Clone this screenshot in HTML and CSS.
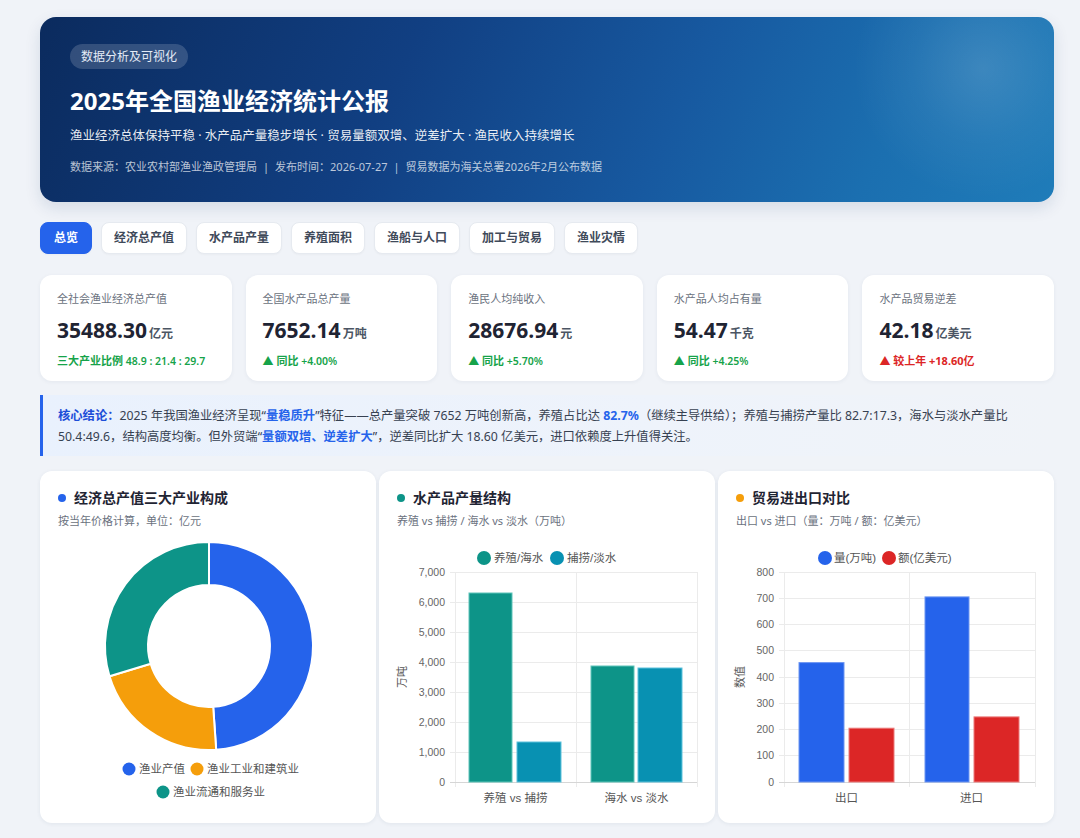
FILE: index.html
```html
<!DOCTYPE html>
<html lang="zh-CN">
<head>
<meta charset="utf-8">
<title>2025年全国渔业经济统计公报</title>
<link rel="stylesheet" href="styles.css">
</head>
<body>
<div class="page">
  <header class="hero">
    <span class="badge">数据分析及可视化</span>
    <h1>2025年全国渔业经济统计公报</h1>
    <p class="sub">渔业经济总体保持平稳 · 水产品产量稳步增长 · 贸易量额双增、逆差扩大 · 渔民收入持续增长</p>
    <p class="meta">数据来源：农业农村部渔业渔政管理局<span class="sep">|</span>发布时间：2026-07-27<span class="sep">|</span>贸易数据为海关总署2026年2月公布数据</p>
  </header>

  <nav class="tabs">
    <span class="tab active">总览</span>
    <span class="tab">经济总产值</span>
    <span class="tab">水产品产量</span>
    <span class="tab">养殖面积</span>
    <span class="tab">渔船与人口</span>
    <span class="tab">加工与贸易</span>
    <span class="tab">渔业灾情</span>
  </nav>

  <section class="stats">
    <div class="stat">
      <div class="label">全社会渔业经济总产值</div>
      <div class="num">35488.30<span class="unit">亿元</span></div>
      <div class="trend up"><b>三大产业比例</b> 48.9 : 21.4 : 29.7</div>
    </div>
    <div class="stat">
      <div class="label">全国水产品总产量</div>
      <div class="num">7652.14<span class="unit">万吨</span></div>
      <div class="trend up"><b>▲ 同比</b> +4.00%</div>
    </div>
    <div class="stat">
      <div class="label">渔民人均纯收入</div>
      <div class="num">28676.94<span class="unit">元</span></div>
      <div class="trend up"><b>▲ 同比</b> +5.70%</div>
    </div>
    <div class="stat">
      <div class="label">水产品人均占有量</div>
      <div class="num">54.47<span class="unit">千克</span></div>
      <div class="trend up"><b>▲ 同比</b> +4.25%</div>
    </div>
    <div class="stat">
      <div class="label">水产品贸易逆差</div>
      <div class="num">42.18<span class="unit">亿美元</span></div>
      <div class="trend down"><b>▲ 较上年</b> <b>+18.60亿</b></div>
    </div>
  </section>

  <div class="conclusion">
    <p class="ctext"><b class="lead">核心结论：</b><span>2025 年我国渔业经济呈现“</span><b class="hl">量稳质升</b><span>”特征——总产量突破 7652 万吨创新高，养殖占比达 </span><b class="hl">82.7%</b><span>（继续主导供给）；养殖与捕捞产量比 82.7:17.3，海水与淡水产量比 </span><span>50.4:49.6，结构高度均衡。但外贸端“</span><b class="hl">量额双增、逆差扩大</b><span>”，逆差同比扩大 18.60 亿美元，进口依赖度上升值得关注。</span></p>
  </div>

  <section class="charts">
    <div class="card">
      <div class="ctitle"><i class="dot blue"></i>经济总产值三大产业构成</div>
      <div class="csub">按当年价格计算，单位：亿元</div>
      <svg class="plot" width="336" height="274" viewBox="0 0 336 274">
        <g stroke="#ffffff" stroke-width="2" stroke-linejoin="round">
          <path fill="#2563eb" d="M169 3 A104 104 0 0 1 176.18 210.75 L173.21 167.85 A61 61 0 0 0 169 46 Z"/>
          <path fill="#f59e0b" d="M176.18 210.75 A104 104 0 0 1 69.5 137.27 L110.64 124.75 A61 61 0 0 0 173.21 167.85 Z"/>
          <path fill="#0d9488" d="M69.5 137.27 A104 104 0 0 1 169 3 L169 46 A61 61 0 0 0 110.64 124.75 Z"/>
        </g>
        <circle cx="89" cy="230" r="6.5" fill="#2563eb"/>
        <text class="lg" x="99" y="234">渔业产值</text>
        <circle cx="157" cy="230" r="6.5" fill="#f59e0b"/>
        <text class="lg" x="167" y="234">渔业工业和建筑业</text>
        <circle cx="123" cy="253" r="6.5" fill="#0d9488"/>
        <text class="lg" x="133" y="257">渔业流通和服务业</text>
      </svg>
    </div>

    <div class="card">
      <div class="ctitle"><i class="dot teal"></i>水产品产量结构</div>
      <div class="csub">养殖 vs 捕捞 / 海水 vs 淡水（万吨）</div>
      <svg class="plot" width="336" height="274" viewBox="0 0 336 274">
        <circle cx="105" cy="19" r="7" fill="#0d9488"/>
        <text class="lg" x="115" y="23">养殖/海水</text>
        <circle cx="178" cy="19" r="7" fill="#0891b2"/>
        <text class="lg" x="188" y="23">捕捞/淡水</text>
        <g stroke="#ebebeb" stroke-width="1" shape-rendering="crispEdges">
          <line x1="71" y1="33" x2="318" y2="33"/>
          <line x1="71" y1="63" x2="318" y2="63"/>
          <line x1="71" y1="93" x2="318" y2="93"/>
          <line x1="71" y1="123" x2="318" y2="123"/>
          <line x1="71" y1="153" x2="318" y2="153"/>
          <line x1="71" y1="183" x2="318" y2="183"/>
          <line x1="71" y1="213" x2="318" y2="213"/>
          <line x1="76" y1="33" x2="76" y2="248"/>
          <line x1="197" y1="33" x2="197" y2="248"/>
          <line x1="318" y1="33" x2="318" y2="248"/>
        </g>
        <line x1="71" y1="243" x2="318" y2="243" stroke="#d6d6d6" stroke-width="1" shape-rendering="crispEdges"/>
        <g class="tk">
          <text x="66" y="36.5">7,000</text>
          <text x="66" y="66.5">6,000</text>
          <text x="66" y="96.5">5,000</text>
          <text x="66" y="126.5">4,000</text>
          <text x="66" y="156.5">3,000</text>
          <text x="66" y="186.5">2,000</text>
          <text x="66" y="216.5">1,000</text>
          <text x="66" y="246.5">0</text>
        </g>
        <text class="ytitle" transform="translate(27 138) rotate(-90)">万吨</text>
        <rect x="90" y="54" width="43" height="189" fill="#0d9488" stroke="#5ec4b9" stroke-width="1"/>
        <rect x="138" y="203" width="44" height="40" fill="#0891b2" stroke="#5cc2dc" stroke-width="1"/>
        <rect x="212" y="127" width="43" height="116" fill="#0d9488" stroke="#5ec4b9" stroke-width="1"/>
        <rect x="259" y="129" width="44" height="114" fill="#0891b2" stroke="#5cc2dc" stroke-width="1"/>
        <text class="xl" x="136.5" y="263">养殖 vs 捕捞</text>
        <text class="xl" x="257.5" y="263">海水 vs 淡水</text>
      </svg>
    </div>

    <div class="card">
      <div class="ctitle"><i class="dot amber"></i>贸易进出口对比</div>
      <div class="csub">出口 vs 进口（量：万吨 / 额：亿美元）</div>
      <svg class="plot" width="336" height="274" viewBox="0 0 336 274">
        <circle cx="107" cy="19" r="7" fill="#2563eb"/>
        <text class="lg" x="116" y="23">量(万吨)</text>
        <circle cx="171" cy="19" r="7" fill="#dc2626"/>
        <text class="lg" x="180" y="23">额(亿美元)</text>
        <g stroke="#ebebeb" stroke-width="1" shape-rendering="crispEdges">
          <line x1="61" y1="33" x2="317" y2="33"/>
          <line x1="61" y1="59.25" x2="317" y2="59.25"/>
          <line x1="61" y1="85.5" x2="317" y2="85.5"/>
          <line x1="61" y1="111.75" x2="317" y2="111.75"/>
          <line x1="61" y1="138" x2="317" y2="138"/>
          <line x1="61" y1="164.25" x2="317" y2="164.25"/>
          <line x1="61" y1="190.5" x2="317" y2="190.5"/>
          <line x1="61" y1="216.75" x2="317" y2="216.75"/>
          <line x1="66" y1="33" x2="66" y2="248"/>
          <line x1="191.5" y1="33" x2="191.5" y2="248"/>
          <line x1="317" y1="33" x2="317" y2="248"/>
        </g>
        <line x1="61" y1="243" x2="317" y2="243" stroke="#d6d6d6" stroke-width="1" shape-rendering="crispEdges"/>
        <g class="tk">
          <text x="56" y="36.5">800</text>
          <text x="56" y="62.75">700</text>
          <text x="56" y="89">600</text>
          <text x="56" y="115.25">500</text>
          <text x="56" y="141.5">400</text>
          <text x="56" y="167.75">300</text>
          <text x="56" y="194">200</text>
          <text x="56" y="220.25">100</text>
          <text x="56" y="246.5">0</text>
        </g>
        <text class="ytitle" transform="translate(26 138) rotate(-90)">数值</text>
        <rect x="81" y="123.6" width="45" height="119.4" fill="#2563eb" stroke="#6d96f2" stroke-width="1"/>
        <rect x="131" y="189.2" width="45" height="53.8" fill="#dc2626" stroke="#ec7a7a" stroke-width="1"/>
        <rect x="207" y="57.9" width="44" height="185.1" fill="#2563eb" stroke="#6d96f2" stroke-width="1"/>
        <rect x="256" y="177.9" width="45" height="65.1" fill="#dc2626" stroke="#ec7a7a" stroke-width="1"/>
        <text class="xl" x="128.5" y="263">出口</text>
        <text class="xl" x="253.5" y="263">进口</text>
      </svg>
    </div>
  </section>
</div>
</body>
</html>
```

FILE: styles.css
```css
* { box-sizing: border-box; }

body {
  margin: 0;
  background: #f0f3f8;
  font-family: "Noto Sans", "Noto Sans CJK SC", sans-serif;
  color: #1f2937;
}

.page {
  width: 1014px;
  margin-left: 40px;
  padding-top: 17px;
  padding-bottom: 20px;
}

/* hero */
.hero {
  height: 185px;
  padding: 27px 30px 0;
  border-radius: 16px;
  color: #fff;
  background:
    radial-gradient(circle at 93% 28%, rgba(255,255,255,0.14) 0, rgba(255,255,255,0.05) 70px, rgba(255,255,255,0) 130px),
    linear-gradient(115deg, #0b2b5e 0%, #113f82 35%, #1759a0 62%, #1b6fb0 82%, #1f7cb9 100%);
  box-shadow: 0 6px 16px rgba(16, 50, 100, 0.12);
}

.badge {
  display: inline-block;
  height: 25px;
  line-height: 25px;
  padding: 0 11px;
  border-radius: 13px;
  font-size: 12px;
  color: #e4ebf6;
  background: rgba(255, 255, 255, 0.16);
}

.hero h1 {
  margin: 16px 0 0;
  font-size: 24px;
  line-height: 32px;
  font-weight: 700;
}

.sub {
  margin: 9px 0 0;
  font-size: 12.5px;
  line-height: 20px;
  color: rgba(255, 255, 255, 0.92);
}

.meta {
  margin: 12px 0 0;
  font-size: 11px;
  line-height: 18px;
  color: rgba(255, 255, 255, 0.72);
}

.sep {
  margin: 0 6px;
}

/* tabs */
.tabs {
  display: flex;
  gap: 9px;
  margin-top: 20px;
}

.tab {
  height: 32px;
  line-height: 30px;
  padding: 0 12px;
  border-radius: 8px;
  border: 1px solid #e6eaf0;
  background: #fff;
  font-size: 12px;
  font-weight: 700;
  color: #3f4a5a;
  box-shadow: 0 1px 2px rgba(0, 0, 0, 0.03);
}

.tab.active {
  background: #2563eb;
  border-color: #2563eb;
  color: #fff;
  padding: 0 13px;
}

/* stats */
.stats {
  display: grid;
  grid-template-columns: repeat(5, 1fr);
  gap: 14px;
  margin-top: 21px;
}

.stat {
  height: 106px;
  padding: 16px 17px 0;
  background: #fff;
  border-radius: 12px;
  box-shadow: 0 1px 4px rgba(30, 50, 90, 0.06);
}

.label {
  font-size: 11px;
  line-height: 16px;
  color: #6b7280;
}

.num {
  margin-top: 9px;
  font-family: "Open Sans", "Noto Sans CJK SC", sans-serif;
  font-size: 21px;
  line-height: 28px;
  font-weight: 700;
  color: #1f2433;
}

.unit {
  margin-left: 2px;
  font-family: "Noto Sans CJK SC", sans-serif;
  font-size: 12px;
  font-weight: 700;
  color: #4b5563;
}

.trend {
  margin-top: 6px;
  font-size: 10.5px;
  line-height: 16px;
  font-weight: 600;
}

.trend b {
  font-weight: 700;
  font-size: 11px;
}

.trend.up { color: #16a34a; }
.trend.down { color: #dc2626; }

/* conclusion */
.conclusion {
  margin-top: 14px;
  padding: 10px 16px 9px 15px;
  border-left: 3px solid #2563eb;
  background: linear-gradient(90deg, #e9f1fd 0%, #eef3fb 60%, #f0f3f8 100%);
}

.ctext {
  margin: 0;
  font-size: 12.3px;
  line-height: 21px;
  color: #374151;
}

.ctext .lead {
  color: #1d4ed8;
}

.ctext .hl {
  color: #2563eb;
}

/* charts */
.charts {
  display: grid;
  grid-template-columns: repeat(3, 336px);
  gap: 3px;
  margin-top: 15px;
}

.card {
  height: 352px;
  padding: 17px 18px 0;
  background: #fff;
  border-radius: 12px;
  box-shadow: 0 1px 4px rgba(30, 50, 90, 0.07);
}

.ctitle {
  display: flex;
  align-items: center;
  gap: 8px;
  font-size: 14px;
  line-height: 20px;
  font-weight: 700;
  color: #1f2433;
}

.dot {
  width: 8px;
  height: 8px;
  border-radius: 50%;
}

.dot.blue { background: #2563eb; }
.dot.teal { background: #0d9488; }
.dot.amber { background: #f59e0b; }

.csub {
  margin-top: 5px;
  font-size: 11px;
  line-height: 16px;
  color: #6b7280;
}

.plot {
  display: block;
  margin: 10px -18px 0;
  overflow: visible;
}

.plot text {
  font-family: "Liberation Sans", "Noto Sans CJK SC", sans-serif;
}

.plot .lg {
  font-size: 11.5px;
  fill: #555;
}

.plot .tk text {
  font-size: 10.5px;
  fill: #666;
  text-anchor: end;
}

.plot .ytitle {
  font-size: 11px;
  fill: #555;
  text-anchor: middle;
}

.plot .xl {
  font-size: 11.5px;
  fill: #555;
  text-anchor: middle;
}
```
